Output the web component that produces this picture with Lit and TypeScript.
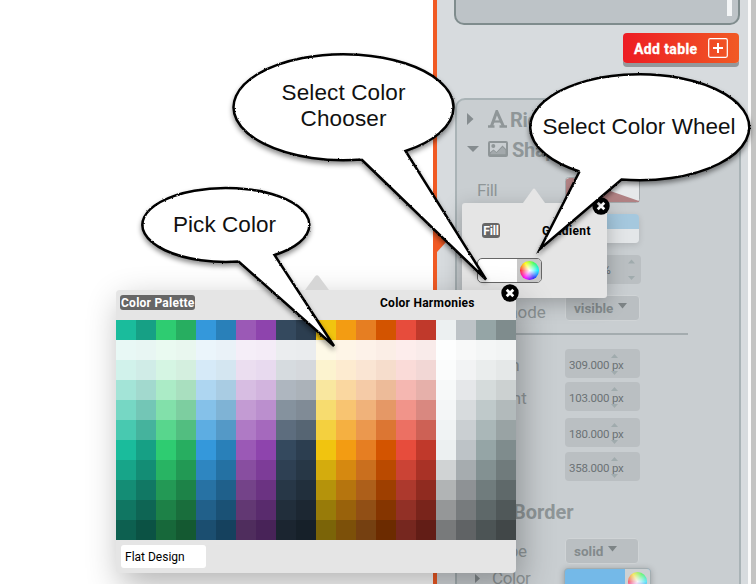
import { LitElement, html, svg, css } from "lit";
import { customElement } from "lit/decorators.js";

const BASE = [
  "1abc9c", "16a085", "2ecc71", "27ae60", "3498db", "2980b9", "9b59b6", "8e44ad", "34495e", "2c3e50",
  "f1c40f", "f39c12", "e67e22", "d35400", "e74c3c", "c0392b", "ecf0f1", "bdc3c7", "95a5a6", "7f8c8d",
];
// Positive: share of white mixed in. Negative: share of black.
const STEPS = [0, 0.9, 0.8, 0.6, 0.4, 0.2, 0, -0.12, -0.25, -0.37, -0.49];

function mix(hex: string, step: number): string {
  const target = step > 0 ? 255 : 0;
  const k = Math.abs(step);
  const c = [0, 2, 4].map((i) => Math.round(parseInt(hex.slice(i, i + 2), 16) * (1 - k) + target * k));
  return `rgb(${c.join(",")})`;
}

@customElement("close-badge")
class CloseBadge extends LitElement {
  static styles = css`
    :host { display: block; width: 18px; height: 18px; }
    svg { display: block; }
  `;
  render() {
    return html`<svg width="18" height="18" viewBox="0 0 18 18">
      <circle cx="9" cy="9" r="8.7" fill="#000" />
      <path d="M5.7 5.7l6.6 6.6M12.3 5.7l-6.6 6.6" stroke="#fff" stroke-width="2.7" />
    </svg>`;
  }
}

@customElement("number-box")
class NumberBox extends LitElement {
  static properties = { value: {} };
  declare value: string;
  static styles = css`
    :host {
      display: flex; align-items: center; position: relative; box-sizing: border-box;
      width: 75px; height: 29px; padding: 3px 0 0 4px; border-radius: 4px; background: #babfc2;
      font: 11.5px Roboto, sans-serif; color: #6b7275; letter-spacing: -0.22px; white-space: nowrap;
    }
    svg { position: absolute; left: 46px; top: 4px; }
    span { position: relative; }
  `;
  render() {
    return html`<svg width="7" height="23" viewBox="0 0 7 23" fill="#a0abad">
        <path d="M0 5L3.5 1L7 5zM0 18L3.5 22L7 18z" />
      </svg><span>${this.value}</span>`;
  }
}

@customElement("palette-popup")
class PalettePopup extends LitElement {
  static styles = css`
    :host {
      display: flex; flex-direction: column; width: 400px; height: 283px; background: #e5e5e5;
      border-radius: 4px; box-shadow: 5px 12px 34px rgba(0, 0, 0, 0.3);
      font: 700 12px Roboto, sans-serif; color: #000; white-space: nowrap;
    }
    .head { display: flex; height: 30px; box-sizing: border-box; padding: 5px 41px 0 4px; justify-content: space-between; align-items: flex-start; }
    .on { background: #666; color: #fff; border-radius: 3px; height: 15px; width: 75px; box-sizing: border-box; padding-left: 1px; line-height: 16px; letter-spacing: 0.25px; }
    .off { line-height: 16px; letter-spacing: 0.25px; width: 95px; }
    .grid { display: grid; grid-template-columns: repeat(20, 20px); grid-auto-rows: 20px; }
    .foot { display: flex; padding: 5px; }
    .name { width: 85px; height: 23px; line-height: 24px; box-sizing: border-box; padding-left: 4px; background: #fff; border-radius: 3px; font-weight: 400; }
    .tip { position: absolute; left: 189px; top: -15px; }
  `;
  render() {
    return html`
      <svg class="tip" width="24" height="15" viewBox="0 0 24 15"><path d="M0 15L10 1.5Q12 -1 14 1.5L24 15z" fill="#d6d6d6" /></svg>
      <div class="head"><span class="on">Color Palette</span><span class="off">Color Harmonies</span></div>
      <div class="grid">${STEPS.map((s) => BASE.map((c) => html`<i style="background:${mix(c, s)}"></i>`))}</div>
      <div class="foot"><span class="name">Flat Design</span></div>
    `;
  }
}

@customElement("fill-popup")
class FillPopup extends LitElement {
  static styles = css`
    :host {
      display: block; width: 145px; height: 95px; background: #e5e5e5; border-radius: 3px;
      box-shadow: 0 5px 20px rgba(0, 0, 0, 0.25); font: 700 12px/15px Roboto, sans-serif; color: #000;
    }
    .tabs { display: flex; justify-content: space-between; padding: 20px 15px 0 20px; line-height: 16px; height: 15px; }
    .on { background: #666; color: #fff; border-radius: 3px; width: 18px; height: 15px; text-align: center; letter-spacing: -0.2px; }
    .off { width: 50px; letter-spacing: 0.35px; }
    .pick { display: flex; margin: 20px 0 0 15px; box-sizing: border-box; width: 65px; height: 25px; border: 1px solid #666; border-radius: 5px; overflow: hidden; background: #fff; }
    .white { width: 39px; }
    .side { flex: 1; display: flex; align-items: center; justify-content: center; background: #c8c8c8; }
    .wheel { width: 19px; height: 19px; border-radius: 50%; background: radial-gradient(circle, #fff 0, rgba(255,255,255,0.6) 30%, transparent 70%), conic-gradient(from 270deg, #f23, #ff0, #3f5, #0ef, #22f, #f0f, #f23); }
    .tip { position: absolute; left: 61px; top: -15px; }
  `;
  render() {
    return html`
      <svg class="tip" width="22" height="15" viewBox="0 0 22 15"><path d="M0 15L10 1Q11 0 12 1L22 15z" fill="#e5e5e5" /></svg>
      <div class="tabs"><span class="on">Fill</span><span class="off">Gradient</span></div>
      <div class="pick"><span class="white"></span><span class="side"><span class="wheel"></span></span></div>
    `;
  }
}

@customElement("app-root")
class AppRoot extends LitElement {
  static styles = css`
    :host { display: flex; position: relative; width: 756px; height: 584px; overflow: hidden; background: #fff; font-family: Roboto, sans-serif; }
    .canvas { width: 433px; flex: none; }
    .side { box-sizing: border-box; width: 315px; flex: none; border-left: 4px solid #f15a24; background: #d7dbde; position: relative; padding-left: 17px; }
    .white { width: 3px; background: #fafafa; }
    .edge { flex: 1; background: #c4c4c3; }
    .box { box-sizing: border-box; width: 286px; height: 25px; border: 2px solid #7f8c8d; border-top: 0; border-radius: 0 0 10px 10px; background: #bdc3c7; display: flex; justify-content: flex-end; padding-right: 6px; }
    .thumb { width: 5px; height: 16px; background: #f3f5f6; }
    .add { display: flex; align-items: center; justify-content: space-between; box-sizing: border-box; width: 116px; height: 30px; margin: 8px 0 0 169px; padding: 0 11px; border-radius: 4px; background: linear-gradient(90deg, #ed1c24, #f15a24); box-shadow: 0 4px 0 #94989b; color: #fff; font-weight: 700; font-size: 14px; letter-spacing: 0.38px; white-space: nowrap; -webkit-text-stroke: 0.3px #fff; }
    .add span { padding-top: 1px; }
    .panel { box-sizing: border-box; width: 286px; height: 520px; margin: 35px 0 0 1px; border: 2px solid #a9b3b6; border-radius: 10px; background: #c9ced1; padding-top: 4px; display: grid; grid-template-rows: 30px 30px 52px 25px 57px 19px 34px 25px 41px 31px 37px 52px 27px 34px; color: #8f9698; font-size: 17px; }
    .row { display: grid; grid-template-columns: 88px auto; align-items: center; padding-left: 20px; min-height: 0; white-space: nowrap; letter-spacing: -0.4px; }
    .row > * { margin-top: -20px; margin-bottom: -20px; }
    .head { display: flex; align-items: center; padding-left: 10px; font-size: 20px; font-weight: 700; min-height: 0; letter-spacing: -0.3px; }
    .head .ico { margin: 0 4px 0 7px; width: 20px; flex: none; }
    .head > span:last-child { padding-top: 1px; }
    .head .border { margin-left: 1px; letter-spacing: 0; }
    .a { margin: 0 3px 0 7px; width: 19px; flex: none; }
    .none { width: 75px; height: 26px; }
    .two { width: 74px; height: 29px; border-radius: 4px; background: linear-gradient(#a5c8de 15px, #e3e6e8 15px); box-shadow: 0 2px 6px rgba(0, 0, 0, 0.12); }
    .pct { box-sizing: border-box; display: flex; justify-content: space-between; align-items: center; width: 76px; height: 29px; padding: 0 6px 0 37px; border-radius: 4px; background: #babfc2; font-size: 12px; color: #6b7275; }
    .sel { box-sizing: border-box; display: flex; align-items: center; gap: 5px; width: 75px; height: 26px; padding-left: 8px; border: 1px solid #d0d4d6; border-radius: 4px; background: #babfc2; font-weight: 700; font-size: 13.5px; color: #838a8c; letter-spacing: 0; }
    .sel svg { margin-top: -4px; }
    .short { width: 74px; }
    .rule { height: 2px; width: 231px; background: #a4acaf; align-self: center; }
    .indent { padding-left: 35px; grid-template-columns: 73px auto; }
    .lab { display: flex; align-items: center; gap: 12px; margin-left: -18px; padding-bottom: 6px; line-height: 20px; }
    .w { letter-spacing: 0; padding-top: 3px; }
    .v { letter-spacing: 0; padding-top: 3px; margin-left: -1px; }
    .low { padding-top: 8px; letter-spacing: -0.05px; }
    .col { box-sizing: border-box; display: flex; width: 87px; height: 27px; margin-left: -1px; border: 1px solid #a3adb0; border-radius: 4px; overflow: hidden; background: #74b9e8; justify-content: flex-end; box-shadow: 0 1px 6px rgba(0,0,0,.25); }
    .cw { width: 25px; display: flex; align-items: center; justify-content: center; background: #cdd1d3; }
    .wheel { width: 19px; height: 19px; border-radius: 50%; opacity: 0.8; background: radial-gradient(circle, #fff 0, rgba(255,255,255,0.6) 30%, transparent 70%), conic-gradient(from 270deg, #f45, #fe3, #4f5, #3ef, #55f, #f4f, #f45); }
    .over, .notch { position: absolute; }
    .notch { left: 0; top: 230px; }
    .fill { left: 462px; top: 203px; }
    .palette { left: 116px; top: 290px; }
    .x1 { left: 592px; top: 197px; }
    .x2 { left: 500.5px; top: 284px; }
    .notes { left: 0; top: 0; font: 22.5px "Liberation Sans", Arial, sans-serif; fill: #111; }
  `;

  tri(right: boolean) {
    return right
      ? html`<svg width="14" height="12" viewBox="0 0 14 12" fill="#858c8f"><path d="M0 0L6.500 6L0 12z" /></svg>`
      : html`<svg width="14" height="12" viewBox="0 0 14 12" fill="#858c8f"><path d="M0 3H12L6 9z" /></svg>`;
  }
  caret() {
    return html`<svg width="9" height="6" viewBox="0 0 9 6" fill="#7d8486"><path d="M0 0H9L4.5 5.500z" /></svg>`;
  }
  bubble(d: string) {
    return svg`<g filter="url(#shade)"><path d=${d} fill="#fff" stroke="#000" stroke-width="2.5" stroke-linejoin="miter" stroke-miterlimit="6" filter="url(#rough)" /></g>`;
  }

  render() {
    return html`
      <div class="canvas"></div>
      <div class="side">
        <div class="box"><span class="thumb"></span></div>
        <div class="add">
          <span>Add table</span>
          <svg width="20" height="20" viewBox="0 0 20 20" fill="none" stroke="#fff"><rect x=".7" y=".7" width="18.6" height="18.6" rx="1.5" stroke-width="1.2" /><path d="M10 5v10M5 10h10" stroke-width="2" /></svg>
        </div>
        <div class="panel">
          <div class="head">${this.tri(true)}<svg class="a" width="19" height="18" viewBox="0 0 19 18" fill="none" stroke="#8f9698"><path d="M0 16.500H6.500M11.500 16.500H19" stroke-width="2.600" /><path d="M3.300 16.500L8.800 1.500L15.500 16.500" stroke-width="3" /><path d="M5.500 11.500H13.500" stroke-width="2.200" /></svg><span>Rich text</span></div>
          <div class="head">${this.tri(false)}
            <svg class="ico" width="20" height="16" viewBox="0 0 20 16"><rect x="1" y="1" width="18" height="14" rx="1" fill="none" stroke="#8f9698" stroke-width="2" /><circle cx="5.300" cy="5" r="2" fill="#8f9698" /><path d="M1 15V12L5.500 8.500L8.500 11L14.500 4.500L19 9V15z" fill="#8f9698" /><path d="M2.500 12.300L5.500 9.500L8.500 12L14.500 6L17.500 9V13.200H2.500z" fill="#c9ced1" opacity=".35" /></svg>
            <span>Shape</span></div>
          <div class="row"><span>Fill</span>
            <svg class="none" viewBox="0 0 75 26"><rect x=".5" y=".5" width="74" height="25" rx="3" fill="#e6e8ea" stroke="#a3a8ab" /><path d="M1 2.500L4 1H8L74 24V25H1z" fill="#b08183" /></svg></div>
          <div class="row"><span>Stroke</span><span class="two"></span></div>
          <div class="row"><span>Opacity</span><span class="pct">%<svg width="7" height="21" viewBox="0 0 7 21" fill="#a0abad"><path d="M0 4.500L3.500 .5L7 4.500zM0 17L3.500 21L7 17z" /></svg></span></div>
          <div class="row"><span class="low">Fill mode</span><span class="sel">visible${this.caret()}</span></div>
          <div class="rule"></div>
          <div class="row"><span class="v">Width</span><number-box .value=${"309.000 px"}></number-box></div>
          <div class="row"><span class="w">Height</span><number-box .value=${"103.000 px"}></number-box></div>
          <div class="row"><span>Left</span><number-box .value=${"180.000 px"}></number-box></div>
          <div class="row"><span>Top</span><number-box .value=${"358.000 px"}></number-box></div>
          <div class="head">${this.tri(false)}<span class="ico"></span><span class="border">Border</span></div>
          <div class="row indent"><span>Type</span><span class="sel short">solid${this.caret()}</span></div>
          <div class="row indent"><span class="lab"><svg width="6" height="9" viewBox="0 0 6 9" fill="#858c8f"><path d="M1 0L6 4.500L1 9z" /></svg>Color</span><span class="col"><span class="cw"><span class="wheel"></span></span></span></div>
        </div>
        <svg class="notch" width="10" height="22" viewBox="0 0 10 22"><path d="M0 0L10 11L0 22z" fill="#f15a24" /></svg>
      </div>
      <div class="white"></div>
      <div class="edge"></div>

      <fill-popup class="over fill"></fill-popup>
      <close-badge class="over x1"></close-badge>
      <palette-popup class="over palette"></palette-popup>
      <close-badge class="over x2"></close-badge>

      <svg class="over notes" width="756" height="584" viewBox="0 0 756 584">
        <defs>
          <filter id="rough" x="-5%" y="-5%" width="110%" height="110%">
            <feTurbulence type="fractalNoise" baseFrequency="0.6" numOctaves="2" seed="4" />
            <feDisplacementMap in="SourceGraphic" scale="2" xChannelSelector="R" yChannelSelector="G" />
          </filter>
          <filter id="shade" x="-10%" y="-10%" width="120%" height="120%">
            <feDropShadow dx="0" dy="3" stdDeviation="2.500" flood-color="#000" flood-opacity="0.45" />
          </filter>
        </defs>
        ${this.bubble("M361.500 159.500A110 53 0 1 1 405.500 151L486 279.500L361.500 159.500")}
        ${this.bubble("M579.500 171.500A109.500 53 0 1 1 621.500 179.500L540 249L579.500 171.500")}
        ${this.bubble("M238.500 261.500A83.500 37 0 1 1 274.500 255L334 346L238.500 261.500")}
        <text x="281.500" y="100" textLength="124">Select Color</text>
        <text x="300.500" y="126" textLength="86">Chooser</text>
        <text x="542.500" y="134" textLength="193">Select Color Wheel</text>
        <text x="173" y="231.500" textLength="103">Pick Color</text>
      </svg>
    `;
  }
}
